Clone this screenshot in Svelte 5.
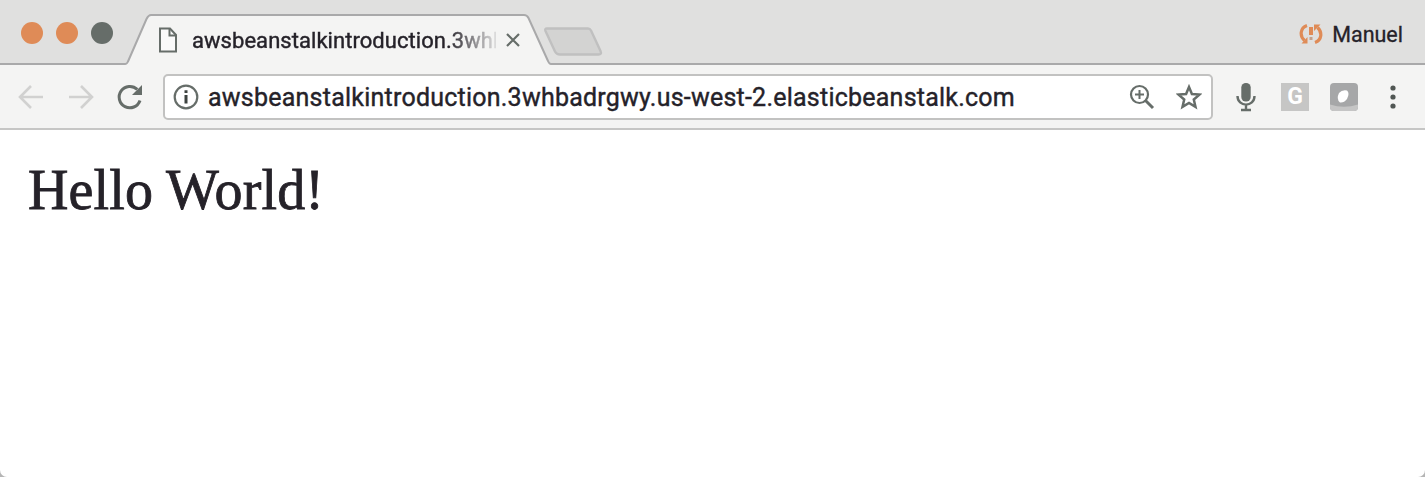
<script>
  const host = 'awsbeanstalkintroduction.3whbadrgwy.us-west-2.elasticbeanstalk.com';
  const lights = ['#df8b57', '#df8b57', '#666d69'];
</script>

<div class="window">
  <header class="strip">
    <div class="lights">
      {#each lights as color}
        <span style="background: {color}"></span>
      {/each}
    </div>
    <div class="tab">
      <svg class="shape" width="426" height="53" viewBox="0 0 426 53">
        <path d="M0 53V50.5H0Q2 50.5 3 48.5L21.500 6Q23.500 2 26 2H399Q402 2 403.500 5L423 48Q424.200 50.500 426 50.500V53Z" fill="#f4f4f3" />
        <path d="M0 51Q2 51 3 48.500L21.500 6Q23.500 2 26 2H399Q402 2 403.500 5L423 48Q424.200 51 426 51" fill="none" stroke="#a9a9aa" stroke-width="2" />
      </svg>
      <svg class="page" width="20" height="26" viewBox="0 0 20 26">
        <path d="M2 1.500H12L18 8V24.500H2Z" fill="#fafafa" stroke="#666d69" stroke-width="2" />
        <path d="M11.500 2V8.500H18" fill="none" stroke="#666d69" stroke-width="2" />
      </svg>
      <span class="title">{host.slice(0, 29)}</span>
      <svg class="close" width="16" height="16" viewBox="0 0 16 16">
        <path d="M2 2L14 14M14 2L2 14" stroke="#666d69" stroke-width="2.200" />
      </svg>
    </div>
    <svg class="newtab" width="60" height="30" viewBox="0 0 60 30">
      <path d="M4 1.500H45Q47 1.500 48 3.500L57.500 24Q59 27.500 55.500 27.500H17Q13.500 27.500 12 24.500L2.500 4Q1.500 1.500 4 1.500Z" fill="#d3d3d2" stroke="#c0c0c0" stroke-width="2.400" />
    </svg>
    <div class="profile">
      <svg width="24" height="22" viewBox="0 0 24 22">
        <g fill="none" stroke="#df8b57" stroke-width="3.200">
          <path d="M8 2.500C1 5 .5 13 5.500 17.500" />
          <path d="M16 19.500C23 17 23.500 9 18.500 4.500" />
        </g>
        <path d="M2.500 20.500H8.500V14Z M21.500 1.500H15V8Z M10 4H14V12H10Z" fill="#df8b57" />
        <path d="M10.500 14H13.500V17H10.500Z" fill="#c4a08b" />
      </svg>
      <span>Manuel</span>
    </div>
  </header>

  <nav class="toolbar">
    <svg class="back" width="26" height="26" viewBox="0 0 26 26">
      <path d="M13 2L2 13L13 24M2 13H25" fill="none" stroke="#d1d1d0" stroke-width="2.600" />
    </svg>
    <svg class="forward" width="26" height="26" viewBox="0 0 26 26">
      <path d="M13 2L24 13L13 24M24 13H1" fill="none" stroke="#d1d1d0" stroke-width="2.600" />
    </svg>
    <svg class="reload" width="28" height="28" viewBox="0 0 28 28">
      <path d="M24 17.500A10.700 10.700 0 1 1 21.300 6.400" fill="none" stroke="#666d69" stroke-width="3" />
      <path d="M26 2V12H16Z" fill="#666d69" />
    </svg>
    <div class="address">
      <svg class="info" width="26" height="26" viewBox="0 0 26 26">
        <circle cx="13" cy="13" r="11.300" fill="none" stroke="#666d69" stroke-width="2.200" />
        <path d="M11.500 6.300H14.500V9H11.500ZM11.500 11H14.500V19.500H11.500Z" fill="#3d4340" />
      </svg>
      <span class="url">{host}</span>
      <svg class="zoom" width="26" height="26" viewBox="0 0 26 26">
        <circle cx="10.500" cy="10.500" r="8.500" fill="none" stroke="#666d69" stroke-width="2.200" />
        <path d="M10.500 6V15M6 10.500H15" stroke="#666d69" stroke-width="2" />
        <path d="M16 16L24 24" stroke="#666d69" stroke-width="3" />
      </svg>
      <svg class="star" width="26" height="26" viewBox="0 0 26 26">
        <path d="M13 3L15.900 10L23.500 10.600L17.800 15.500L19.500 22.900L13 19L6.500 22.900L8.200 15.500L2.500 10.600L10.100 10Z" fill="none" stroke="#666d69" stroke-width="2.500" />
      </svg>
    </div>
    <svg class="mic" width="20" height="30" viewBox="0 0 20 30">
      <rect x="5.300" y="1" width="9.400" height="18.500" rx="4.500" fill="#666d69" />
      <path d="M1.500 14C1.500 25.500 18.500 25.500 18.500 14M10 22V28M5 28H15" fill="none" stroke="#666d69" stroke-width="2.400" />
    </svg>
    <span class="ext letter">G</span>
    <svg class="ext" width="28" height="28" viewBox="0 0 28 28">
      <rect width="28" height="28" rx="4" fill="#a6a7a8" />
      <path d="M0 21.500Q14 26 28 21.500V24Q28 28 24 28H4Q0 28 0 24Z" fill="#c5c5c5" />
      <path d="M9 10Q12 6.500 17 7.500Q20 10 17 16Q14 20 10 19.500Q6 16 9 10Z" fill="#fff" />
    </svg>
    <svg class="menu" width="8" height="26" viewBox="0 0 8 26">
      <g fill="#505653"><circle cx="4" cy="4" r="2.600" /><circle cx="4" cy="13" r="2.600" /><circle cx="4" cy="22" r="2.600" /></g>
    </svg>
  </nav>

  <main>Hello World!</main>
</div>

<style>
  :global(body) { background: #b5b5b5; }
  .window {
    height: 477px;
    display: flex;
    flex-direction: column;
    overflow: hidden;
    background: #fff;
    border-radius: 0 0 7px 7px;
    color: #252229;
    font-family: Roboto, "Liberation Sans", sans-serif;
  }
  svg { display: block; flex: none; }
  .strip {
    box-sizing: border-box;
    height: 65px;
    display: flex;
    background: #e0e0df;
    box-shadow: inset 0 -2px #a9a9aa;
    flex: none;
  }
  .lights { display: flex; gap: 13px; padding: 22px 0 0 21px; width: 104px; }
  .lights span { width: 22px; height: 22px; border-radius: 50%; }
  .tab { position: relative; width: 426px; height: 65px; display: flex; flex: none; }
  .shape { position: absolute; left: 0; top: 13px; }
  .page { position: relative; margin: 27px 0 0 33px; }
  .title {
    position: relative;
    margin: 26px 0 0 14px;
    width: 304px;
    height: 30px;
    line-height: 29px;
    font-size: 22px;
    letter-spacing: 0.05px;
    white-space: nowrap;
    overflow: hidden;
    -webkit-text-stroke: 0.4px currentColor;
    mask-image: linear-gradient(to right, #000 84%, transparent 102%);
  }
  .close { position: relative; margin: 32px 0 0 9px; }
  .newtab { margin: 27px 0 0 -8px; }
  .profile {
    display: flex;
    align-items: center;
    gap: 9px;
    height: 30px;
    margin: 19px 22px 0 auto;
    font-size: 21.5px;
    -webkit-text-stroke: 0.3px currentColor;
  }
  .profile span { line-height: 30px; padding-top: 1px; }
  .toolbar {
    box-sizing: border-box;
    height: 65px;
    display: flex;
    align-items: center;
    background: #f4f4f3;
    border-bottom: 2px solid #c6c6c5;
    flex: none;
  }
  .back { margin-left: 18px; }
  .forward { margin-left: 24px; }
  .reload { margin-left: 22px; }
  .address {
    box-sizing: border-box;
    width: 1050px;
    height: 46px;
    margin-left: 19px;
    padding: 0 9px 0 8px;
    display: flex;
    align-items: center;
    border: 2px solid #c2c2c1;
    border-radius: 5px;
    background: #fff;
    flex: none;
  }
  .url {
    margin-left: 9px;
    padding-top: 1px;
    font-size: 25px;
    letter-spacing: 0.23px;
    white-space: nowrap;
    -webkit-text-stroke: 0.4px currentColor;
  }
  .zoom { margin-left: auto; }
  .star { margin-left: 21px; }
  .mic { margin-left: 23px; }
  .ext { width: 28px; height: 28px; margin-left: 25px; flex: none; }
  .ext + .ext { margin-left: 21px; }
  .letter {
    background: #c6c6c5;
    color: #fff;
    font-size: 23px;
    font-weight: 700;
    line-height: 28px;
    text-align: center;
  }
  .menu { margin-left: 31px; }
  main {
    padding: 28px 28px 0;
    font-family: "Liberation Serif", serif;
    font-size: 56px;
    line-height: 64px;
    letter-spacing: 0.12px;
    -webkit-text-stroke: 0.8px currentColor;
  }
</style>
